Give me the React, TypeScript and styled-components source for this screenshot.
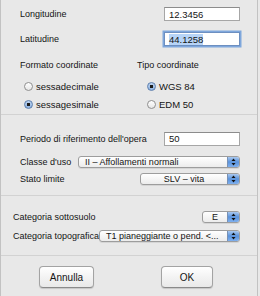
import React from "react";
import styled, { createGlobalStyle } from "styled-components";

const Global = createGlobalStyle`
  html, body { margin: 0; padding: 0; background: #e8e8e8; }
  body { font-family: "Liberation Sans", Arial, sans-serif; font-size: 9px; color: #141414; }
`;

const Frame = styled.div`
  width: 256px;
  height: 296px;
  border-left: 1px solid #c2c2c2;
  border-right: 1px solid #c2c2c2;
  background: #e8e8e8;
  display: flex;
  flex-direction: column;
`;

const Section = styled.div<{ $h: number; $pt: number; $last?: boolean }>`
  height: ${(p) => p.$h}px;
  box-sizing: border-box;
  padding-top: ${(p) => p.$pt}px;
  border-bottom: ${(p) => (p.$last ? "none" : "1px solid #d2d2d2")};
  display: flex;
  flex-direction: column;
`;

const Row = styled.div<{ $h: number; $mt?: number; $pl?: number }>`
  height: ${(p) => p.$h}px;
  margin-top: ${(p) => p.$mt ?? 0}px;
  padding-left: ${(p) => p.$pl ?? 19}px;
  padding-right: 17px;
  display: flex;
  align-items: center;
`;

const Label = styled.span`
  flex: 1;
  white-space: nowrap;
`;

const Input = styled.div<{ $focused?: boolean }>`
  width: 76px;
  height: 14px;
  box-sizing: border-box;
  background: #fff;
  border: 1px solid #a6a6a6;
  border-top-color: #8c8c8c;
  padding-left: 4px;
  display: flex;
  align-items: center;
  font-size: 9.5px;
  ${(p) =>
    p.$focused &&
    `box-shadow: 0 0 0 1.5px #7fa7dc; border-color: #6d8fc0;`}
`;

const Selected = styled.span`
  background: #b7d4f7;
`;

const Columns = styled.div`
  display: grid;
  grid-template-columns: 117px 1fr;
  margin-top: 13px;
`;

const Col = styled.div<{ $pl: number }>`
  display: flex;
  flex-direction: column;
  padding-left: ${(p) => p.$pl}px;
`;

const Heading = styled.div`
  height: 12px;
  line-height: 12px;
  white-space: nowrap;
`;

const RadioRow = styled.div<{ $mt: number; $pl: number }>`
  height: 12px;
  margin-top: ${(p) => p.$mt}px;
  padding-left: ${(p) => p.$pl}px;
  display: flex;
  align-items: center;
  gap: 3px;
  white-space: nowrap;
  font-size: 9.5px;
`;

const RadioDot = styled.span<{ $on?: boolean }>`
  width: 9px;
  height: 9px;
  box-sizing: border-box;
  border-radius: 50%;
  border: 1px solid ${(p) => (p.$on ? "#5d7fae" : "#8f8f8f")};
  background: ${(p) =>
    p.$on
      ? "radial-gradient(circle, #1c1c1c 0 1.6px, transparent 2px), linear-gradient(#bcd3ef, #8fb2e0)"
      : "linear-gradient(#ffffff, #e6e6e6)"};
`;

const Popup = styled.div<{ $w: number }>`
  width: ${(p) => p.$w}px;
  height: 12px;
  box-sizing: border-box;
  border: 1px solid #9d9d9d;
  border-radius: 3px;
  background: linear-gradient(#ffffff, #ececec);
  display: flex;
  align-items: center;
  overflow: hidden;
  box-shadow: 0 1px 0 rgba(0,0,0,0.08);
`;

const PopupText = styled.span<{ $center?: boolean }>`
  flex: 1;
  padding-left: ${(p) => (p.$center ? 0 : 6)}px;
  text-align: ${(p) => (p.$center ? "center" : "left")};
  white-space: nowrap;
  overflow: hidden;
  font-size: 9px;
`;

const PopupArrows = styled.span`
  width: 11px;
  align-self: stretch;
  background: linear-gradient(#a9c8ef, #5a93dc 50%, #7fb0ef);
  border-left: 1px solid #7891b5;
  display: flex;
  align-items: center;
  justify-content: center;
`;

const Buttons = styled.div`
  display: grid;
  grid-template-columns: 1fr 1fr;
  padding-top: 10px;
`;

const ButtonCell = styled.div<{ $pl: number }>`
  padding-left: ${(p) => p.$pl}px;
`;

const Button = styled.div<{ $w: number }>`
  width: ${(p) => p.$w}px;
  height: 22px;
  box-sizing: border-box;
  border: 1px solid #a3a3a3;
  border-bottom-color: #8a8a8a;
  border-radius: 4px;
  background: linear-gradient(#ffffff, #f3f3f3 50%, #e9e9e9);
  box-shadow: 0 1px 1px rgba(0,0,0,0.15);
  display: flex;
  align-items: center;
  justify-content: center;
  font-size: 10px;
`;

const Arrows = () => (
  <svg width="5" height="8" viewBox="0 0 5 8">
    <path d="M2.5 0.5 L4.5 3 L0.5 3 Z" fill="#111" />
    <path d="M2.5 7.5 L4.5 5 L0.5 5 Z" fill="#111" />
  </svg>
);

const Select = ({ w, text, center }: { w: number; text: string; center?: boolean }) => (
  <Popup $w={w}>
    <PopupText $center={center}>{text}</PopupText>
    <PopupArrows>
      <Arrows />
    </PopupArrows>
  </Popup>
);

export default function App() {
  return (
    <>
      <Global />
      <Frame>
        <Section $h={115} $pt={7}>
          <Row $h={14}>
            <Label>Longitudine</Label>
            <Input>12.3456</Input>
          </Row>
          <Row $h={14} $mt={11}>
            <Label>Latitudine</Label>
            <Input $focused>
              <Selected>44.1258</Selected>
            </Input>
          </Row>
          <Columns>
            <Col $pl={19}>
              <Heading>Formato coordinate</Heading>
              <RadioRow $mt={9} $pl={4}>
                <RadioDot />
                <span>sessadecimale</span>
              </RadioRow>
              <RadioRow $mt={6} $pl={4}>
                <RadioDot $on />
                <span>sessagesimale</span>
              </RadioRow>
            </Col>
            <Col $pl={19}>
              <Heading>Tipo coordinate</Heading>
              <RadioRow $mt={9} $pl={10}>
                <RadioDot $on />
                <span>WGS 84</span>
              </RadioRow>
              <RadioRow $mt={6} $pl={10}>
                <RadioDot />
                <span>EDM 50</span>
              </RadioRow>
            </Col>
          </Columns>
        </Section>
        <Section $h={81} $pt={17}>
          <Row $h={13}>
            <Label>Periodo di riferimento dell'opera</Label>
            <Input>50</Input>
          </Row>
          <Row $h={12} $mt={11}>
            <Label>Classe d'uso</Label>
            <Select w={162} text="II – Affollamenti normali" />
          </Row>
          <Row $h={12} $mt={5}>
            <Label>Stato limite</Label>
            <Select w={100} text="SLV – vita" center />
          </Row>
        </Section>
        <Section $h={60} $pt={15}>
          <Row $h={11} $pl={12}>
            <Label>Categoria sottosuolo</Label>
            <Select w={38} text="E" center />
          </Row>
          <Row $h={12} $mt={8} $pl={12}>
            <Label>Categoria topografica</Label>
            <Select w={142} text="T1 pianeggiante o pend. <..." />
          </Row>
        </Section>
        <Section $h={40} $pt={0} $last>
          <Buttons>
            <ButtonCell $pl={38}>
              <Button $w={55}>Annulla</Button>
            </ButtonCell>
            <ButtonCell $pl={32}>
              <Button $w={52}>OK</Button>
            </ButtonCell>
          </Buttons>
        </Section>
      </Frame>
    </>
  );
}
